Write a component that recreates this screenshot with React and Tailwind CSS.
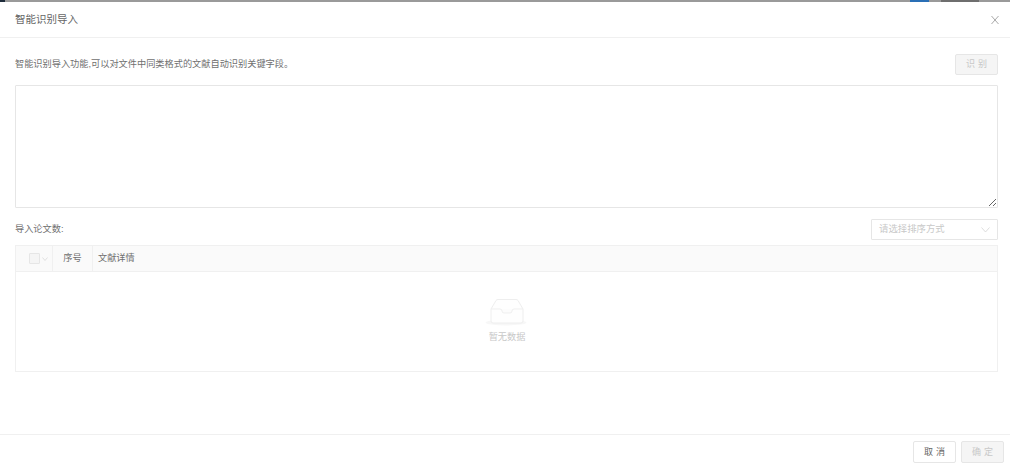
const cjk = { fontFamily: '"Liberation Sans","Noto Sans CJK SC",sans-serif' };

function EmptyIcon() {
  return (
    <svg width="44" height="30" viewBox="0 0 44 30" fill="none">
      <ellipse cx="21" cy="24.5" rx="20.5" ry="3" fill="#f7f7f7" />
      <path d="M6 11 L11 2.5 Q11.6 1.5 13 1.5 H31 Q32.4 1.5 33 2.5 L38 11 V23 a2 2 0 0 1 -2 2 H8 a2 2 0 0 1 -2 -2 Z" fill="#fefefe" stroke="#eeeeee" strokeWidth="1" />
      <path d="M6 11 H15 a2 2 0 0 1 2 2 a2 2 0 0 0 2 2 h6 a2 2 0 0 0 2 -2 a2 2 0 0 1 2 -2 H38" fill="#fcfcfc" stroke="#efefef" strokeWidth="1" />
    </svg>
  );
}

export default function App() {
  return (
    <div style={cjk} className="w-[1010px] h-[468px] bg-white flex flex-col overflow-hidden">
      <div className="h-[2px] bg-[#9a9a9a] flex shrink-0">
        <div className="w-[5px] bg-[#1d2b3a]" />
        <div className="ml-[905px] w-[19px] bg-[#2a6fb5]" />
        <div className="ml-[12px] w-[38px] bg-[#6e6e6e]" />
      </div>
      <div className="h-[36px] shrink-0 border-b border-[#f0f0f0] flex items-center justify-between pl-[15px] pr-[10px]">
        <span className="text-[10.5px] text-[#666]">智能识别导入</span>
        <svg width="10" height="10" viewBox="0 0 10 10" stroke="#a0a0a0" strokeWidth="0.9"><path d="M1.5 1 L8.5 9 M8.5 1 L1.5 9" /></svg>
      </div>
      <div className="flex-1 flex flex-col pl-[15px] pr-[12px] pt-[16px]">
        <div className="flex items-center justify-between h-[21px]">
          <span className="text-[9.2px] text-[#6f6f6f] pt-[1px]">智能识别导入功能,可以对文件中同类格式的文献自动识别关键字段。</span>
          <button className="w-[43px] h-[21px] bg-[#f5f5f5] border border-[#e6e6e6] rounded-[2px] text-[9px] text-[#c8c8c8] tracking-[3px] pl-[3px] pt-[1px]">识别</button>
        </div>
        <textarea className="mt-[10px] h-[123px] w-full border border-[#e6e6e6] rounded-[1px] block shrink-0 resize-y outline-none" />
        <div className="mt-[11px] h-[21px] flex items-center justify-between">
          <span className="text-[9.2px] text-[#6f6f6f]">导入论文数:</span>
          <div className="w-[127px] h-[21px] border border-[#e6e6e6] rounded-[1px] flex items-center justify-between pl-[7px] pr-[7px]">
            <span className="text-[9.4px] text-[#c8c8c8]">请选择排序方式</span>
            <svg width="9" height="6" viewBox="0 0 9 6" fill="none" stroke="#d4d4d4" strokeWidth="0.8"><path d="M0.5 0.5 L4.5 5 L8.5 0.5" /></svg>
          </div>
        </div>
        <div className="mt-[5px] h-[127px] border border-[#f0f0f0] flex flex-col">
          <div className="h-[26px] shrink-0 bg-[#fafafa] border-b border-[#f0f0f0] flex text-[9.2px] text-[#6f6f6f]">
            <div className="w-[37px] border-r border-[#f0f0f0] flex items-center gap-[2px] pl-[13px]">
              <span className="w-[11px] h-[11px] shrink-0 bg-[#f5f5f5] border border-[#e6e6e6] rounded-[1px]" />
              <svg className="shrink-0" width="6" height="4" viewBox="0 0 6 4" fill="none" stroke="#d4d4d4" strokeWidth="0.7"><path d="M0.5 0.5 L3 3.5 L5.5 0.5" /></svg>
            </div>
            <div className="w-[40px] border-r border-[#f0f0f0] flex items-center justify-center pt-[1px]">序号</div>
            <div className="flex-1 flex items-center pl-[5px] pt-[1px]">文献详情</div>
          </div>
          <div className="flex-1 flex flex-col items-center pt-[26px] pl-[1px]">
            <EmptyIcon />
            <span className="mt-[3px] text-[9.2px] text-[#c8c8c8]">暂无数据</span>
          </div>
        </div>
      </div>
      <div className="h-[34px] shrink-0 border-t border-[#f0f0f0] flex items-start justify-end gap-[5px] pt-[6px] pr-[6px]">
        <button className="w-[43px] h-[22px] bg-white border border-[#e6e6e6] rounded-[2px] text-[9px] text-[#666] tracking-[3px] pl-[3px] pt-[1px]">取消</button>
        <button className="w-[43px] h-[22px] bg-[#f5f5f5] border border-[#e6e6e6] rounded-[2px] text-[9px] text-[#c8c8c8] tracking-[3px] pl-[3px] pt-[1px]">确定</button>
      </div>
    </div>
  );
}
